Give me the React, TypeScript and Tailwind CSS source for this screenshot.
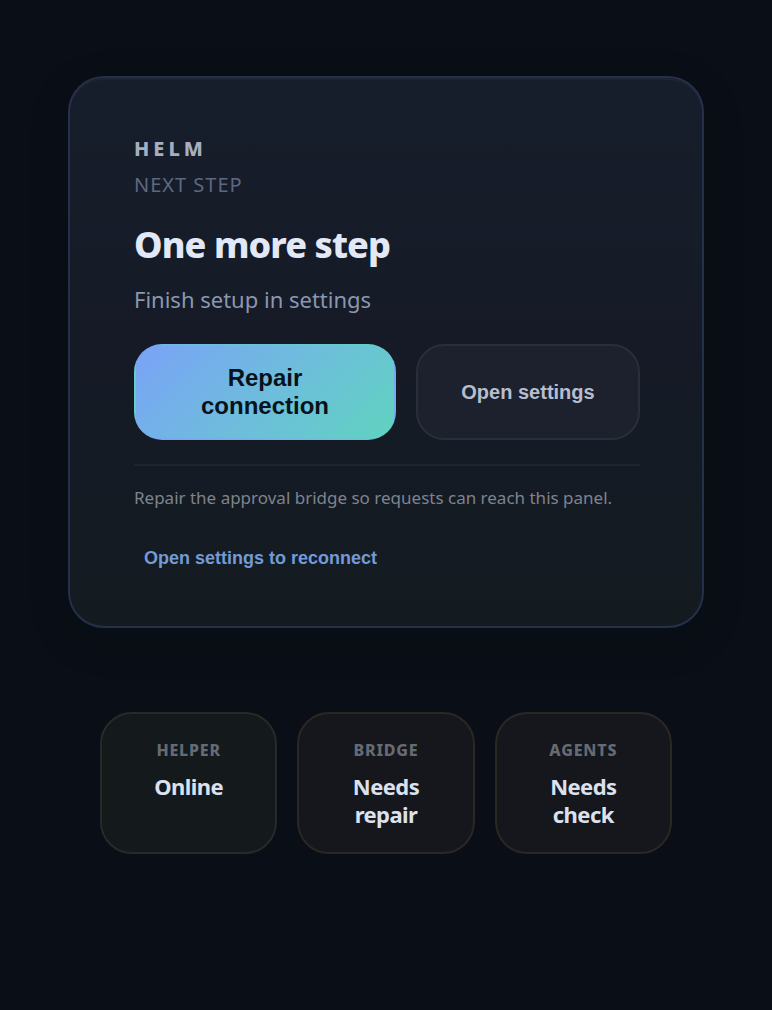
/**
 * Helm onboarding panel: next-step card plus a row of health tiles.
 */

import clsx from 'clsx'

type Tone = 'ok' | 'warn'

interface HealthItem {
  label: string
  value: string
  tone: Tone
}

const HEALTH: HealthItem[] = [
  { label: 'Helper', value: 'Online', tone: 'ok' },
  { label: 'Bridge', value: 'Needs repair', tone: 'warn' },
  { label: 'Agents', value: 'Needs check', tone: 'warn' },
]

const TONE_CLASSES: Record<Tone, string> = {
  ok: 'border-[#232d28] bg-[#14191c]',
  warn: 'border-[#2b2725] bg-[#16171c]',
}

function HealthTile({ label, value, tone }: HealthItem) {
  return (
    <div className={clsx('rounded-[32px] border-2 px-10 py-6 text-center', TONE_CLASSES[tone])}>
      <dt className="text-base leading-6 font-extrabold tracking-wider text-[#656a73] uppercase">{label}</dt>
      <dd className="mt-2.5 text-[22px] leading-7 font-bold tracking-tight text-[#dbe1ee]">{value}</dd>
    </div>
  )
}

function NextStepCard() {
  return (
    <section className="rounded-[36px] border-2 border-[#25304a] bg-linear-to-b from-[#171e2b] via-[#151a26] to-[#141b20] pt-[57px] pr-[62px] pb-[46px] pl-16 shadow-[0_12px_40px_rgba(4,18,22,0.2),inset_0_2px_0_rgba(255,255,255,0.03)]">
      <p className="text-xl leading-7 font-extrabold tracking-[0.2em] text-[#a5afc0] uppercase">Helm</p>
      <p className="mt-2 text-xl leading-7 tracking-wider text-[#5d6880] uppercase">Next step</p>

      <h1 className="mt-[26px] text-4xl leading-10 font-extrabold tracking-tight text-[#e2e8f5]">One more step</h1>
      <p className="mt-[18px] text-[22px] leading-8 text-[#8b97ae]">Finish setup in settings</p>

      <div className="mt-[29px] grid grid-cols-[262fr_224fr] gap-5 font-['Liberation_Sans',Arial,sans-serif] font-bold">
        <button
          type="button"
          className="h-24 rounded-[28px] border-2 border-transparent bg-linear-135 from-[#7aa2f7] to-[#5fd3bf] px-10 text-2xl leading-7 text-[#08121a]"
        >
          Repair connection
        </button>
        <button
          type="button"
          className="h-24 rounded-[28px] border-2 border-[#292f3a] bg-[#1c212d] px-10 text-xl text-[#b6bece]"
        >
          Open settings
        </button>
      </div>

      <div className="mt-6 border-t-2 border-[#1f252f] pt-4">
        <p className="text-[17px] leading-8 text-[#7e838e]">
          Repair the approval bridge so requests can reach this panel.
        </p>
        <button
          type="button"
          className="mt-[22px] rounded-lg px-2.5 py-2 font-['Liberation_Sans',Arial,sans-serif] text-lg leading-7 font-bold text-[#739ad6]"
        >
          Open settings to reconnect
        </button>
      </div>
    </section>
  )
}

export default function App() {
  return (
    <main className="min-h-screen bg-[#0a0e16] px-[68px] py-[76px] font-['Noto_Sans',sans-serif]">
      <NextStepCard />
      <dl className="mt-[84px] grid grid-cols-3 gap-5 px-8">
        {HEALTH.map((item) => (
          <HealthTile key={item.label} {...item} />
        ))}
      </dl>
    </main>
  )
}
